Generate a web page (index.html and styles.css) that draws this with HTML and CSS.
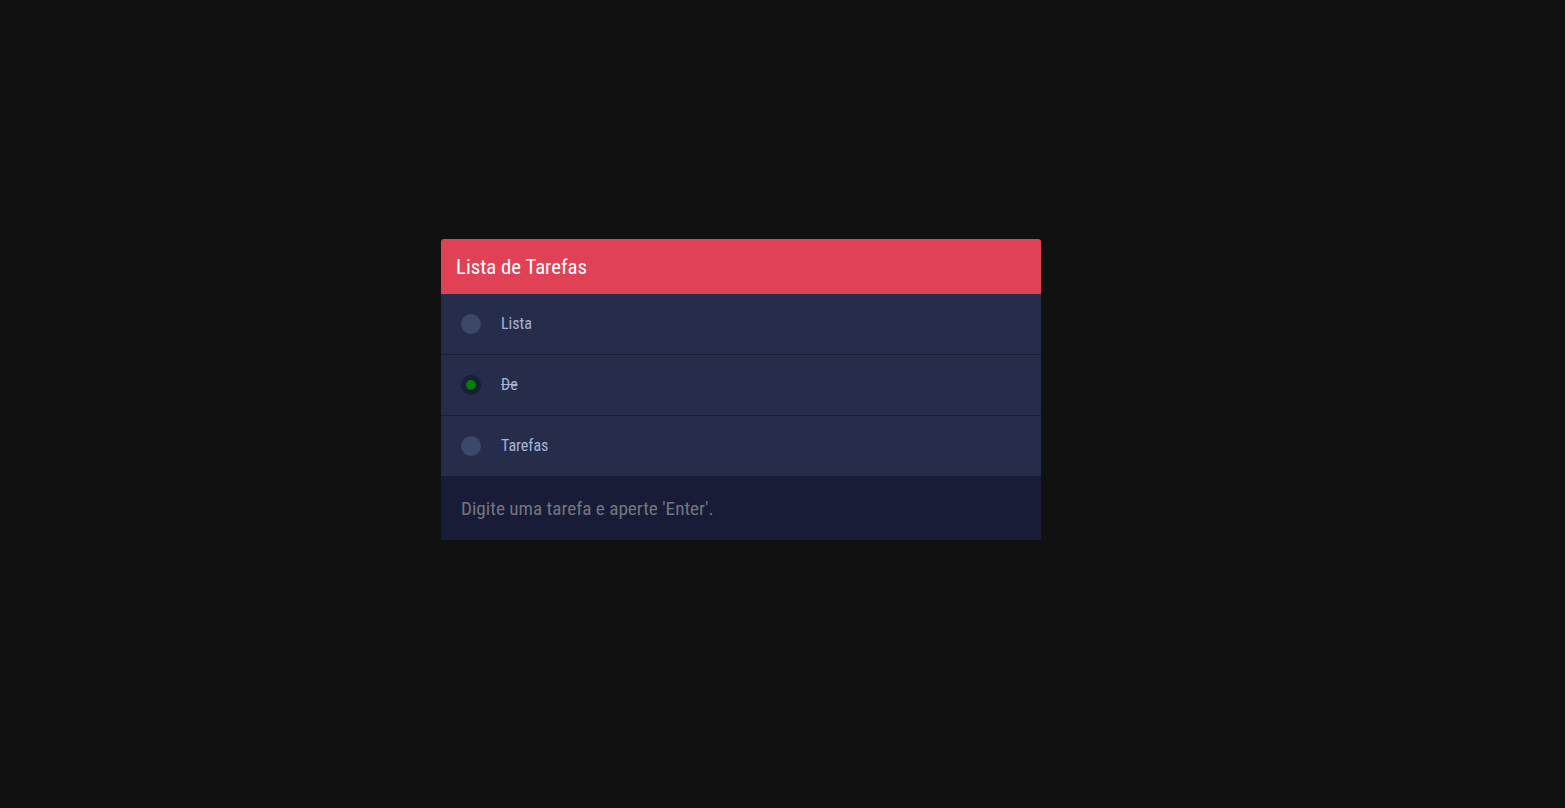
FILE: index.html
```html
<!DOCTYPE html>
<html lang="pt">
<head>
<meta charset="utf-8">
<title>Lista de Tarefas</title>
<link rel="stylesheet" href="styles.css">
</head>
<body>
<main class="page">
  <section class="card">
    <header class="card-header">Lista de Tarefas</header>
    <ul class="tasks">
      <li class="task"><span class="check"></span><span class="label">Lista</span></li>
      <li class="task done"><span class="check"></span><span class="label">De</span></li>
      <li class="task"><span class="check"></span><span class="label">Tarefas</span></li>
    </ul>
    <div class="new-task"><span class="placeholder">Digite uma tarefa e aperte 'Enter'.</span></div>
  </section>
</main>
</body>
</html>
```

FILE: styles.css
```css
html, body {
  margin: 0;
  padding: 0;
  background: #111111;
  height: 100%;
}
body {
  font-family: "Roboto", "Liberation Sans", sans-serif;
  font-stretch: condensed;
}
.page {
  padding: 239px 0 0 441px;
}
.card {
  width: 600px;
}
.card-header {
  height: 55px;
  background: #e04155;
  color: #ffffff;
  border-radius: 3px 3px 0 0;
  display: flex;
  align-items: center;
  padding: 0 15px;
  font-size: 20.8px;
  box-sizing: border-box;
}
.tasks {
  list-style: none;
  margin: 0;
  padding: 0;
}
.task {
  height: 60px;
  background: #262d4b;
  display: flex;
  align-items: center;
  padding: 0 20px;
  gap: 20px;
  border-bottom: 1px solid #1b2039;
}
.task:last-child {
  border-bottom: none;
}
.check {
  width: 20px;
  height: 20px;
  border-radius: 50%;
  background: #3d4869;
  flex: none;
  display: flex;
  align-items: center;
  justify-content: center;
}
.done .check {
  background: #1a1f38;
}
.done .check::after {
  content: "";
  width: 10px;
  height: 10px;
  border-radius: 50%;
  background: #008000;
}
.label {
  color: #aab3d6;
  font-size: 16px;
  line-height: 1;
  margin-top: -1px;
}
.done .label {
  text-decoration: line-through;
}
.new-task {
  height: 64px;
  background: #181c37;
  display: flex;
  align-items: center;
  padding: 0 20px;
}
.placeholder {
  color: #74767f;
  font-size: 19.2px;
}
```
